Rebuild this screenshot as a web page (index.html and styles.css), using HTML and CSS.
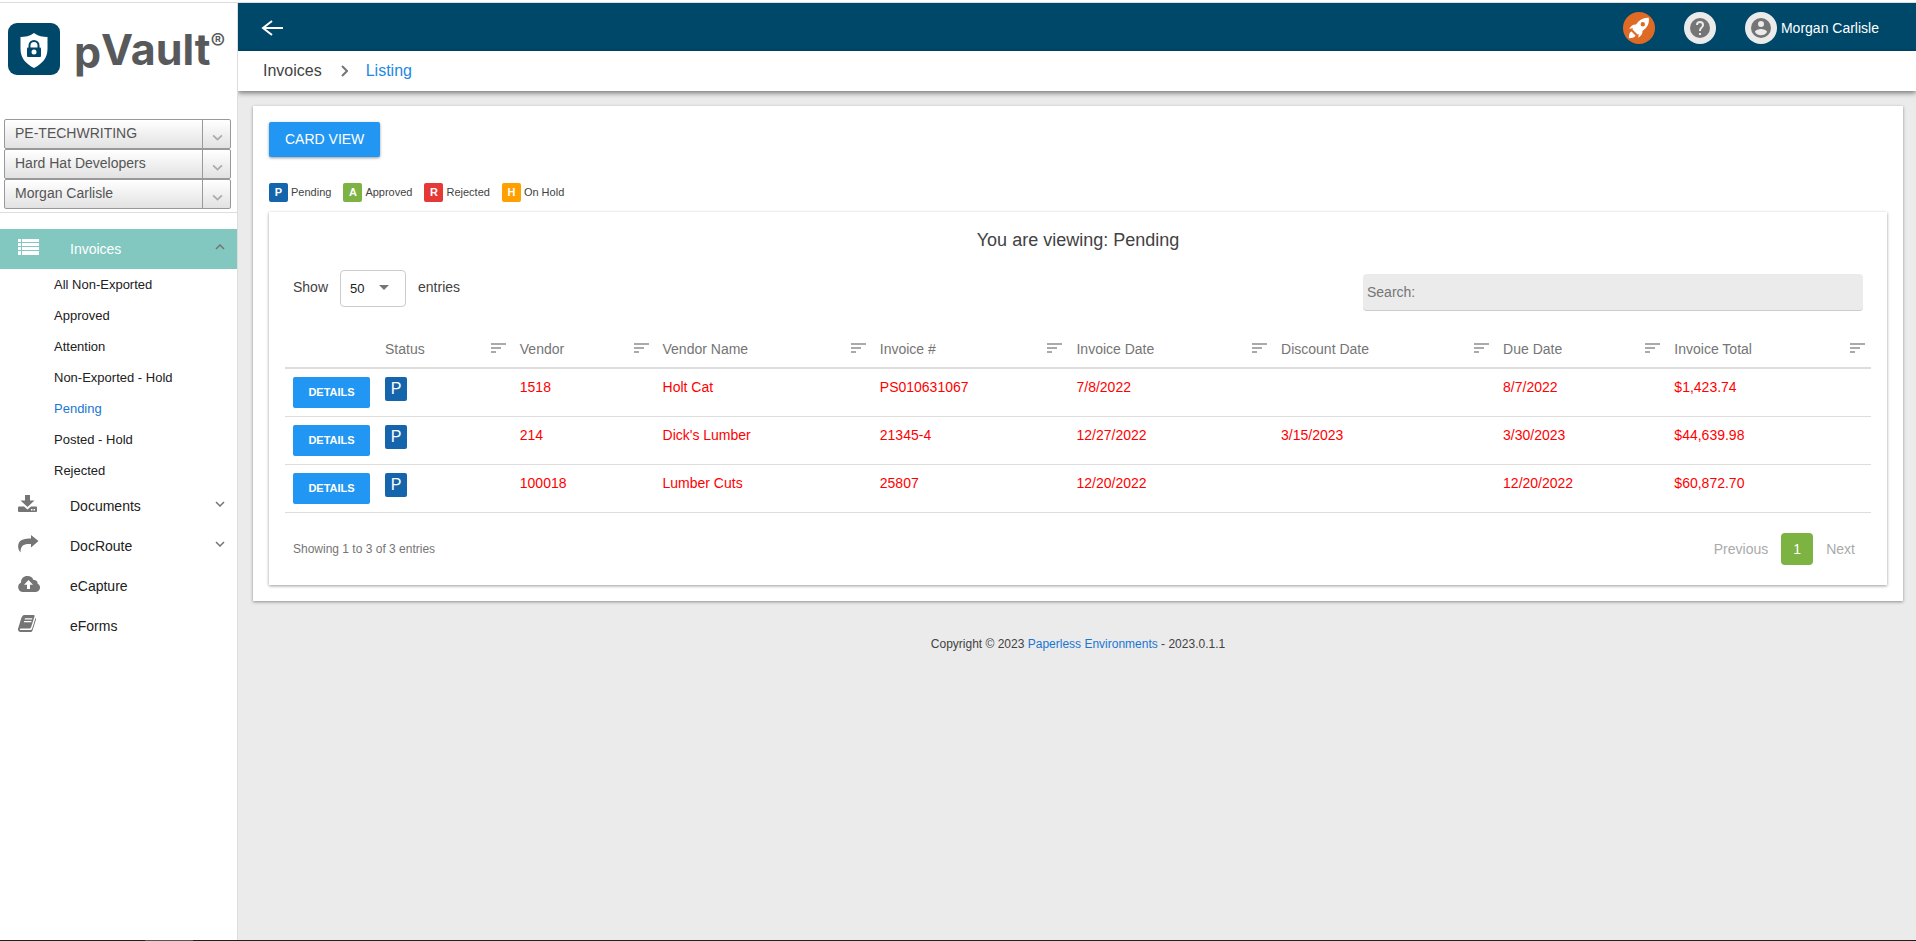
FILE: index.html
```html
<!DOCTYPE html>
<html lang="en">
<head>
<meta charset="utf-8">
<title>pVault - Invoices</title>
<meta name="viewport" content="width=device-width, initial-scale=1">
<link rel="stylesheet" href="styles.css">
</head>
<body>
<svg class="defs" aria-hidden="true">
  <symbol id="sort" viewBox="0 0 15 10"><path d="M0 0h15v2H0zM0 4h10v2H0zM0 8h5v2H0z" fill="currentColor"/></symbol>
  <symbol id="down" viewBox="0 0 10 6"><path d="M1 1l4 4 4-4" fill="none" stroke="currentColor" stroke-width="1.5"/></symbol>
</svg>
<div class="app">
  <aside class="sidebar">
    <div class="brand">
      <svg class="brand-mark" viewBox="0 0 52 52" aria-hidden="true">
        <rect width="52" height="52" rx="9" fill="#00486a"/>
        <path d="M26 10c4 3 9 4 13.500 4v12c0 9-5.500 15-13.500 19-8-4-13.500-10-13.500-19V14c4.500 0 9.500-1 13.500-4z" fill="#fff"/>
        <path d="M21.500 25v-2.500a4.500 4.500 0 0 1 9 0V25" fill="none" stroke="#00486a" stroke-width="2"/>
        <rect x="19" y="24.500" width="14" height="9.500" rx="1" fill="#00486a"/>
        <circle cx="26" cy="29" r="2.500" fill="#fff"/>
      </svg>
      <div class="wordmark"><span class="wordmark-p">p</span><span>Vault</span><span class="wordmark-r">®</span></div>
    </div>
    <div class="pickers">
      <div class="picker"><select aria-label="Environment"><option>PE-TECHWRITING</option></select><svg><use href="#down"/></svg></div>
      <div class="picker"><select aria-label="Company"><option>Hard Hat Developers</option></select><svg><use href="#down"/></svg></div>
      <div class="picker"><select aria-label="User"><option>Morgan Carlisle</option></select><svg><use href="#down"/></svg></div>
    </div>
    <nav class="menu">
      <a class="item active" href="#">
        <svg class="item-icon" viewBox="0 0 22 18" aria-hidden="true"><path d="M0 1h3v3H0zM4 1h17v3H4zM0 5h3v3H0zM4 5h17v3H4zM0 9h3v3H0zM4 9h17v3H4zM0 13h3v4H0zM4 13h17v4H4z" fill="currentColor"/></svg>
        <span>Invoices</span><svg class="arrow up"><use href="#down"/></svg>
      </a>
      <a class="sub" href="#">All Non-Exported</a>
      <a class="sub" href="#">Approved</a>
      <a class="sub" href="#">Attention</a>
      <a class="sub" href="#">Non-Exported - Hold</a>
      <a class="sub current" href="#">Pending</a>
      <a class="sub" href="#">Posted - Hold</a>
      <a class="sub" href="#">Rejected</a>
      <a class="item" href="#">
        <svg class="item-icon" viewBox="0 0 22 18" aria-hidden="true"><path d="M7 0h5v5.500h4.500L9.500 12 2.500 5.500H7zM0 12.500q0-1 1-1h5l3.500 3 3.500-3h5q1 0 1 1V16q0 1-1 1H1q-1 0-1-1zM13 14v1.500h1.500V14zm2.500 0v1.500H17V14z" fill="currentColor" fill-rule="evenodd"/></svg>
        <span>Documents</span><svg class="arrow"><use href="#down"/></svg>
      </a>
      <a class="item" href="#">
        <svg class="item-icon" viewBox="0 0 22 18" aria-hidden="true"><path d="M13 0l7.500 6L13 12.500V9C6 8.500 2.500 10 2.500 17.500 0 14.500-.5 11 .8 8 2.500 4.500 7 3.500 13 3.500z" fill="currentColor"/></svg>
        <span>DocRoute</span><svg class="arrow"><use href="#down"/></svg>
      </a>
      <a class="item" href="#">
        <svg class="item-icon" viewBox="0 0 22 18" aria-hidden="true"><path d="M5 17a5 5 0 0 1-2-9.500C3 3.500 5.500 1 9.500 1c3 0 5 1.500 6 4 2.500-.5 4.500 1.500 4 3.500A4.500 4.500 0 0 1 18 17zM10.500 5L6 9.800h3V14h3V9.800h3z" fill="currentColor" fill-rule="evenodd"/></svg>
        <span>eCapture</span>
      </a>
      <a class="item" href="#">
        <svg class="item-icon" viewBox="0 0 22 18" aria-hidden="true"><path d="M6 0h9.500q1.500 0 1 1.500L13 12.500q-.5 1-1.500 1H2.500q-1 .5-.5 1.500h10.500q1 0 1.500-1L17.500 3q1 .5.500 1.500l-3.500 11q-.5 1.500-2 1.500H2.500Q.5 17 0 15q-.3-1 .3-2L3.500 2.500Q4.500 0 6 0zM7 3.300l-.4 1.200H14l.4-1.200zM6.200 6l-.4 1.200h7.400l.4-1.200z" fill="currentColor" fill-rule="evenodd"/></svg>
        <span>eForms</span>
      </a>
    </nav>
  </aside>

  <div class="content">
    <header class="topbar">
      <button class="back" aria-label="Back"><svg width="22" height="16" viewBox="0 0 22 16"><path d="M22 8H2M11 1L2 8l9 7" fill="none" stroke="#fff" stroke-width="2"/></svg></button>
      <div class="tools">
        <button class="round rocket" aria-label="What's new">
          <svg width="22" height="22" viewBox="0 0 22 22"><path d="M20.800.8C15.500.3 11.500 2.500 8 7.500c-2.800-.2-5 1.300-6.800 4.200l3.800-.4-.5 1.200 5 5 1.200-.5-.4 3.800c2.900-1.800 4.400-4 4.200-6.800 5-3.500 7-7.500 6.300-13.200zM14.800 5a2.200 2.200 0 1 1 0 4.400 2.200 2.200 0 0 1 0-4.400z" fill="#fff" fill-rule="evenodd"/><path d="M3.500 14.500C1.500 15 .8 17.500.8 21.200c3.700 0 6.200-.7 6.700-2.700z" fill="#fff"/></svg>
        </button>
        <button class="round" aria-label="Help">
          <svg width="24" height="24" viewBox="0 0 24 24"><path d="M12 2a10 10 0 1 0 0 20 10 10 0 0 0 0-20zm1 17h-2v-2h2v2zm2.070-7.750l-.9.920C13.450 12.900 13 13.500 13 15h-2v-.5c0-1.100.450-2.100 1.170-2.830l1.240-1.260c.370-.360.590-.860.590-1.410a2 2 0 1 0-4 0H8a4 4 0 1 1 8 0c0 .880-.360 1.680-.930 2.250z" fill="#757575"/></svg>
        </button>
        <button class="account"><span class="round"><svg width="24" height="24" viewBox="0 0 24 24"><path d="M12 2a10 10 0 1 0 0 20 10 10 0 0 0 0-20zm0 3a3 3 0 1 1 0 6 3 3 0 0 1 0-6zm0 14.200a7.200 7.200 0 0 1-6-3.220c.030-1.990 4-3.080 6-3.080s5.970 1.090 6 3.080a7.200 7.200 0 0 1-6 3.220z" fill="#757575"/></svg></span>Morgan Carlisle</button>
      </div>
    </header>
    <nav class="crumbs" aria-label="Breadcrumb">
      <span>Invoices</span>
      <svg width="8" height="12" viewBox="-1 0 8 12" aria-hidden="true"><path d="M1 1l5 5-5 5" fill="none" stroke="#757575" stroke-width="2"/></svg>
      <a href="#">Listing</a>
    </nav>

    <main class="card">
      <button class="card-view">CARD VIEW</button>
      <div class="legend">
        <span class="key"><b class="tag pending">P</b>Pending</span>
        <span class="key"><b class="tag approved">A</b>Approved</span>
        <span class="key"><b class="tag rejected">R</b>Rejected</span>
        <span class="key"><b class="tag hold">H</b>On Hold</span>
      </div>
      <section class="panel">
        <h1 class="title">You are viewing: Pending</h1>
        <div class="filters">
          <div class="length"><label for="len">Show</label>
            <span class="length-box"><select id="len"><option>50</option></select><svg width="10" height="5" viewBox="0 0 10 5"><path d="M0 0h10L5 5z" fill="#757575"/></svg></span>
            <span>entries</span></div>
          <input class="search" type="search" placeholder="Search:" aria-label="Search">
        </div>
        <table class="grid">
          <colgroup><col class="c-action"><col class="c-status"><col class="c-vendor"><col class="c-name"><col class="c-invoice"><col class="c-date"><col class="c-discount"><col class="c-due"><col class="c-total"></colgroup>
          <thead><tr>
            <td></td>
            <th><div>Status<svg><use href="#sort"/></svg></div></th>
            <th><div>Vendor<svg><use href="#sort"/></svg></div></th>
            <th><div>Vendor Name<svg><use href="#sort"/></svg></div></th>
            <th><div>Invoice #<svg><use href="#sort"/></svg></div></th>
            <th><div>Invoice Date<svg><use href="#sort"/></svg></div></th>
            <th><div>Discount Date<svg><use href="#sort"/></svg></div></th>
            <th><div>Due Date<svg><use href="#sort"/></svg></div></th>
            <th><div>Invoice Total<svg><use href="#sort"/></svg></div></th>
          </tr></thead>
          <tbody>
            <tr><td><button class="details">DETAILS</button></td><td><span class="state">P</span></td><td>1518</td><td>Holt Cat</td><td>PS010631067</td><td>7/8/2022</td><td></td><td>8/7/2022</td><td>$1,423.74</td></tr>
            <tr><td><button class="details">DETAILS</button></td><td><span class="state">P</span></td><td>214</td><td>Dick's Lumber</td><td>21345-4</td><td>12/27/2022</td><td>3/15/2023</td><td>3/30/2023</td><td>$44,639.98</td></tr>
            <tr><td><button class="details">DETAILS</button></td><td><span class="state">P</span></td><td>100018</td><td>Lumber Cuts</td><td>25807</td><td>12/20/2022</td><td></td><td>12/20/2022</td><td>$60,872.70</td></tr>
          </tbody>
        </table>
        <div class="summary">
          <span>Showing 1 to 3 of 3 entries</span>
          <div class="pages"><button class="page">Previous</button><button class="page on">1</button><button class="page">Next</button></div>
        </div>
      </section>
    </main>
    <footer class="footer">Copyright © 2023 <a href="#">Paperless Environments</a> - 2023.0.1.1</footer>
  </div>
</div>
</body>
</html>
```
FILE: styles.css
```css
* { box-sizing: border-box; }
body {
  margin: 0;
  min-height: 100vh;
  display: flex;
  flex-direction: column;
  background: #ebebeb;
  color: #424242;
  font: 14px/20px "Liberation Sans", Arial, sans-serif;
  border-top: 2px solid #fff;
}
body::after {
  content: "";
  height: 1px;
  background: linear-gradient(90deg, #1e1e1e 145px, #555 145px, #555 193px, #1e1e1e 193px);
}
a { color: inherit; text-decoration: none; }
button, select, input { font: inherit; color: inherit; }
button { border: 0; padding: 0; background: none; cursor: pointer; }
.defs { display: none; }
.app { flex: 1; display: flex; border-top: 1px solid #ddd; }

.sidebar { position: relative; z-index: 1; width: 238px; flex: none; background: #fff; border-right: 1px solid #ddd; }
.brand { display: flex; padding: 20px 8px 0; height: 116px; gap: 14px; }
.brand-mark { width: 52px; height: 52px; flex: none; }
.wordmark { display: flex; align-items: flex-start; padding-top: 2px; font: 700 43px/48px Inter, "Open Sans", sans-serif; color: #58595b; }
.wordmark-p { padding-top: 3px; }
.wordmark-r { font-size: 22px; line-height: 32px; font-weight: 500; }
.pickers { padding: 0 6px 3px 4px; border-bottom: 1px solid #ddd; }
.picker { position: relative; height: 30px; border: 1px solid #999; border-radius: 2px; background: linear-gradient(#fff, #e2e2e2); }
.picker select { appearance: none; width: 100%; height: 26px; padding: 0 30px 0 10px; border: 0; background: none; color: #555; }
.picker svg { position: absolute; right: 0; top: 0; width: 28px; height: 28px; padding: 14px 7px 7px 9px; border-left: 1px solid #999; color: #aaa; pointer-events: none; }

.menu { padding-top: 16px; color: #212121; }
.item { display: flex; align-items: center; height: 40px; padding: 0 12px 0 18px; }
.item-icon { width: 22px; height: 18px; margin: 0 30px 5px 0; color: #757575; }
.item span { flex: 1; }
.arrow { width: 10px; height: 6px; margin-bottom: 4px; color: #757575; }
.arrow.up { transform: rotate(180deg); }
.active { background: #82c8c1; color: #fff; }
.active .item-icon { color: #fff; }
.sub { display: block; padding-left: 54px; font-size: 13px; line-height: 31px; }
.current { color: #1976d2; }

.content { flex: 1; min-width: 0; }
.topbar { display: flex; justify-content: space-between; align-items: center; height: 48px; padding: 2px 37px 0 23px; background: #00486a; color: #fff; }
.back { display: flex; }
.tools { display: flex; gap: 29px; }
.round { display: flex; align-items: center; justify-content: center; width: 32px; height: 32px; border-radius: 50%; background: #ebebeb; }
.rocket { background: #de6a26; }
.account { display: flex; align-items: center; gap: 4px; }
.crumbs { position: relative; display: flex; align-items: center; gap: 18px; height: 40px; padding-left: 25px; background: #fff; font-size: 16px; box-shadow: 0 2px 5px rgba(0, 0, 0, .5); }
.crumbs a { color: #1e88e5; }

.card { margin: 15px 13px 0 15px; padding: 16px; background: #fff; box-shadow: 0 1px 3px rgba(0, 0, 0, .4); }
.card-view { display: block; height: 35px; padding: 0 16px 2px; border-radius: 2px; background: #2196f3; color: #fff; box-shadow: 0 1px 3px rgba(0, 0, 0, .4); }
.legend { display: flex; gap: 12px; margin: 26px 0 10px; font-size: 11px; line-height: 19px; }
.key { display: flex; gap: 3px; }
.tag { width: 19px; border-radius: 2px; color: #fff; text-align: center; }
.pending { background: #1565ac; }
.approved { background: #7cb342; }
.rejected { background: #e53935; }
.hold { background: #ffa000; }
.panel { padding: 15px 16px 20px; box-shadow: 0 1px 3px rgba(0, 0, 0, .4); }
.title { margin: 0; text-align: center; font-size: 18px; line-height: 26px; font-weight: 400; }
.filters { display: flex; justify-content: space-between; align-items: flex-start; padding: 17px 8px 0; }
.length { display: flex; gap: 12px; line-height: 34px; }
.length-box { position: relative; }
.length-box select { appearance: none; display: block; width: 66px; height: 37px; padding: 0 9px; border: 1px solid #ccc; border-radius: 4px; background: #fff; color: #212121; font-size: 13px; }
.length-box svg { position: absolute; right: 17px; top: 15px; pointer-events: none; }
.search { width: 500px; height: 37px; margin-top: 4px; padding: 0 4px; border: 0; border-bottom: 1px solid #ccc; border-radius: 4px; background: #ebebeb; }
.search::placeholder { color: #757575; opacity: 1; }

.grid { width: 100%; margin-top: 17px; table-layout: fixed; border-collapse: separate; border-spacing: 0; }
.c-action { width: 5.8%; }
.c-status { width: 8.5%; }
.c-vendor { width: 9%; }
.c-name { width: 13.7%; }
.c-invoice { width: 12.4%; }
.c-date { width: 12.9%; }
.c-discount { width: 14%; }
.c-due { width: 10.8%; }
.c-total { width: 12.9%; }
.grid thead th, .grid thead td { height: 41px; padding: 2px 6px 0 8px; border-bottom: 2px solid #ddd; color: #757575; font-weight: 400; text-align: left; }
.grid th div { display: flex; align-items: center; justify-content: space-between; }
.grid th svg { width: 15px; height: 10px; margin-bottom: 2px; color: #aaa; }
.grid tbody td { height: 48px; padding: 8px 8px 0; border-bottom: 1px solid #ddd; vertical-align: top; color: #f00; }
.details { display: block; width: 77px; height: 31px; padding-bottom: 1px; border-radius: 2px; background: #2196f3; color: #fff; font-size: 11px; font-weight: 700; }
.state { display: inline-block; width: 22px; border-radius: 2px; background: #1565ac; color: #fff; font-size: 16px; line-height: 24px; text-align: center; }
.summary { display: flex; justify-content: space-between; align-items: center; padding: 20px 8px 0; color: #757575; font-size: 12px; }
.pages { display: flex; gap: 5px; font-size: 14px; }
.page { height: 32px; padding: 0 8px; color: #aaa; }
.page.on { width: 32px; border-radius: 4px; background: #7cb342; color: #fff; }
.footer { padding: 33px 0 0 2px; text-align: center; font-size: 12px; }
.footer a { color: #1976d2; }
```
